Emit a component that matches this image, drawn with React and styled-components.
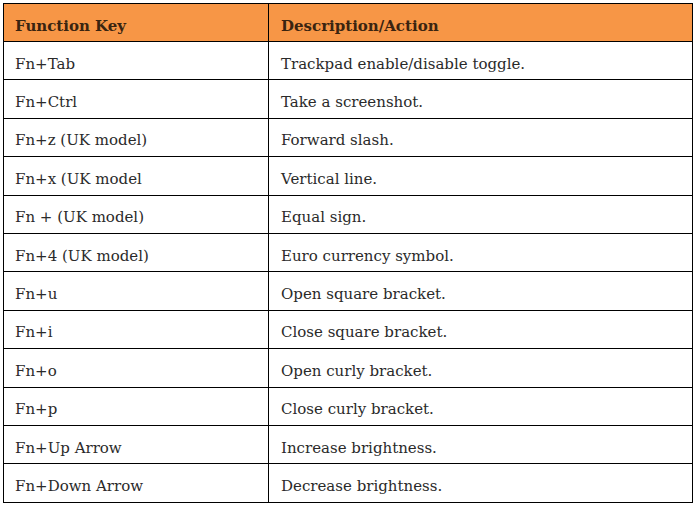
import React from "react";
import styled, { createGlobalStyle } from "styled-components";

const Global = createGlobalStyle`
  html, body { margin: 0; padding: 0; background: #ffffff; }
  body { font-family: "DejaVu Serif", "Liberation Serif", serif; }
`;

const Page = styled.div`
  padding: 3px 0 0 3px;
`;

const Table = styled.table`
  border-collapse: collapse;
  width: 690px;
  table-layout: fixed;
  font-family: "DejaVu Serif", "Liberation Serif", serif;
  font-size: 15px;
`;

const HeadCell = styled.th`
  background: #f79646;
  color: #3a2410;
  font-weight: bold;
  text-align: left;
  height: 38px;
  padding: 6px 0 0 ${(p) => p.$pad}px;
  border: 1.5px solid #000;
  width: ${(p) => (p.$w ? `${p.$w}px` : "auto")};
  box-sizing: border-box;
`;

const Cell = styled.td`
  color: #2a2a2a;
  height: 38.4px;
  padding: 6px 0 0 ${(p) => p.$pad}px;
  border: 1.5px solid #000;
  box-sizing: border-box;
`;

const rows = [
  ["Fn+Tab", "Trackpad enable/disable toggle."],
  ["Fn+Ctrl", "Take a screenshot."],
  ["Fn+z (UK model)", "Forward slash."],
  ["Fn+x (UK model", "Vertical line."],
  ["Fn + (UK model)", "Equal sign."],
  ["Fn+4 (UK model)", "Euro currency symbol."],
  ["Fn+u", "Open square bracket."],
  ["Fn+i", "Close square bracket."],
  ["Fn+o", "Open curly bracket."],
  ["Fn+p", "Close curly bracket."],
  ["Fn+Up Arrow", "Increase brightness."],
  ["Fn+Down Arrow", "Decrease brightness."],
];

export default function App() {
  return (
    <Page>
      <Global />
      <Table>
        <thead>
          <tr>
            <HeadCell $w={265} $pad={11}>Function Key</HeadCell>
            <HeadCell $pad={12}>Description/Action</HeadCell>
          </tr>
        </thead>
        <tbody>
          {rows.map(([k, d]) => (
            <tr key={k}>
              <Cell $pad={11}>{k}</Cell>
              <Cell $pad={12}>{d}</Cell>
            </tr>
          ))}
        </tbody>
      </Table>
    </Page>
  );
}
